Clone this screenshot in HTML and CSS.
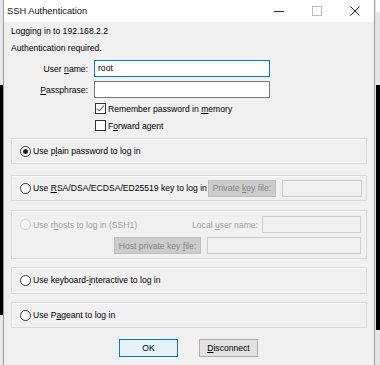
FILE: index.html
```html
<!DOCTYPE html>
<html>
<head>
<meta charset="utf-8">
<link rel="stylesheet" href="styles.css">
</head>
<body>
<div class="window">
  <div class="titlebar">
    <span class="title">SSH Authentication</span>
    <div class="controls">
      <span class="ctl"><svg width="10" height="10" viewBox="0 0 10 10"><path d="M0 5.5H10" stroke="#222" stroke-width="1"/></svg></span>
      <span class="ctl"><svg width="10" height="10" viewBox="0 0 10 10"><rect x="0.5" y="0.5" width="9" height="9" fill="none" stroke="#bbb" stroke-width="1"/></svg></span>
      <span class="ctl"><svg width="10" height="10" viewBox="0 0 10 10"><path d="M0.5 0.5L9.5 9.5M9.5 0.5L0.5 9.5" stroke="#222" stroke-width="1"/></svg></span>
    </div>
  </div>
  <div class="content">
    <div class="info">Logging in to 192.168.2.2</div>
    <div class="info">Authentication required.</div>
    <div class="form">
      <label class="lbl">User <u>n</u>ame:</label>
      <div class="input focus">root</div>
      <label class="lbl"><u>P</u>assphrase:</label>
      <div class="input"></div>
      <span></span>
      <div class="check"><span class="box checked"><svg width="11" height="11" viewBox="0 0 11 11"><path d="M2 5.5L4.3 8L9 2.5" fill="none" stroke="#333" stroke-width="1"/></svg></span><span>Remember password in <u>m</u>emory</span></div>
      <span></span>
      <div class="check"><span class="box"></span><span>F<u>o</u>rward agent</span></div>
    </div>

    <div class="group g1">
      <div class="row"><span class="radio on"></span><span>Use p<u>l</u>ain password to log in</span></div>
    </div>
    <div class="group g2">
      <div class="row">
        <span class="radio"></span><span>Use <u>R</u>SA/DSA/ECDSA/ED25519 key to log in</span>
        <span class="btn dis keybtn"><span>Private <u>k</u>ey file:</span></span>
        <span class="input dis keyin"></span>
      </div>
    </div>
    <div class="group g3 disabled">
      <div class="row">
        <span class="radio"></span><span>Use r<u>h</u>osts to log in (SSH1)</span>
        <span class="local">Local <u>u</u>ser name:</span>
        <span class="input dis localin"></span>
      </div>
      <div class="row row2">
        <span class="btn dis hostbtn"><span>Host private key <u>f</u>ile:</span></span>
        <span class="input dis hostin"></span>
      </div>
    </div>
    <div class="group g4">
      <div class="row"><span class="radio"></span><span>Use keyboard-<u>i</u>nteractive to log in</span></div>
    </div>
    <div class="group g5">
      <div class="row"><span class="radio"></span><span>Use P<u>a</u>geant to log in</span></div>
    </div>

    <div class="buttons">
      <span class="btn ok">OK</span>
      <span class="btn"><span><u>D</u>isconnect</span></span>
    </div>
  </div>
</div>
</body>
</html>
```
FILE: styles.css
```css
html, body {
  margin: 0;
  padding: 0;
}
body {
  width: 380px;
  height: 365px;
  overflow: hidden;
  font-family: "Liberation Sans", Arial, sans-serif;
  font-size: 8.6px;
  color: #000;
  background:
    linear-gradient(#000, #000) 0 85px / 3px 230px no-repeat,
    linear-gradient(#000, #000) 376px 85px / 4px 245px no-repeat,
    linear-gradient(#fff, #fff) 376px 0 / 4px 12px no-repeat,
    #e6e6e6;
}
u { text-decoration: underline; text-underline-offset: 1px; }

.window {
  margin-left: 3px;
  width: 370px;
  height: 372px;
  border-left: 1px solid #9c9c9c;
  border-right: 1px solid #9c9c9c;
  background: #f0f0f0;
}
.titlebar {
  height: 22px;
  background: #fff;
  display: flex;
  align-items: center;
}
.title {
  padding-left: 3px;
  font-size: 9.3px;
  color: #111;
}
.controls {
  margin-left: auto;
  display: flex;
  align-items: center;
}
.ctl {
  width: 38px;
  height: 22px;
  display: flex;
  align-items: center;
  justify-content: center;
}
.ctl svg { display: block; }

.content {
  padding: 3px 7px 0 6px;
}
.info {
  height: 13px;
  line-height: 13px;
  padding-left: 1px;
}
.info + .info { margin-top: 4px; }

.form {
  display: grid;
  grid-template-columns: 78px 176px;
  grid-template-rows: 17px 17px 13px 13px;
  row-gap: 4px;
  column-gap: 6px;
  margin-top: 5px;
  align-items: center;
}
.lbl {
  text-align: right;
}
.input {
  box-sizing: border-box;
  height: 17px;
  border: 1px solid #7a7a7a;
  background: #fff;
  padding-left: 3px;
  line-height: 15px;
  display: block;
}
.input.focus { border-color: #0078d7; }
.input.dis {
  border-color: #cccccc;
  background: #f0f0f0;
}
.check {
  display: flex;
  align-items: center;
  margin-left: 1px;
  white-space: nowrap;
}
.box {
  box-sizing: border-box;
  width: 11px;
  height: 11px;
  border: 1px solid #333;
  background: #fff;
  margin-right: 2px;
  position: relative;
  flex: none;
}
.box svg { position: absolute; left: -1px; top: -1px; }

.group {
  box-sizing: border-box;
  margin-left: 1px;
  border: 1px solid #dadada;
  box-shadow: inset 1px 1px 0 #fbfbfb;
  padding: 0 4px 0 8px;
}
.g1 { margin-top: 6px; height: 26px; }
.g2 { margin-top: 11px; height: 26px; }
.g3 { margin-top: 9px; height: 49px; padding-top: 5px; padding-right: 5px; }
.g4 { margin-top: 8px; height: 27px; }
.g5 { margin-top: 8px; height: 26px; }
.row {
  display: flex;
  align-items: center;
  height: 24px;
  white-space: nowrap;
}
.g3 .row { height: 17px; }
.g3 .row2 { margin-top: 4px; justify-content: flex-end; }
.radio {
  box-sizing: border-box;
  width: 11px;
  height: 11px;
  border: 1px solid #333;
  border-radius: 50%;
  background: #fff;
  margin-right: 2px;
  flex: none;
  position: relative;
}
.radio.on::after {
  content: "";
  position: absolute;
  left: 2px; top: 2px;
  width: 5px; height: 5px;
  border-radius: 50%;
  background: #222;
}
.disabled { color: #a0a0a0; }
.disabled .radio { border-color: #cfcfcf; background: #f5f5f5; }

.btn {
  box-sizing: border-box;
  display: inline-flex;
  align-items: center;
  justify-content: center;
  height: 17px;
  border: 1px solid #adadad;
  background: #e1e1e1;
  white-space: nowrap;
}
.btn.dis {
  border-color: #bfbfbf;
  background: #cccccc;
  color: #838383;
}
.keybtn { margin-left: auto; width: 68px; }
.keyin { width: 80px; margin-left: 6px; }
.local { margin-left: auto; margin-right: 4px; }
.localin { width: 99px; }
.hostbtn { width: 87px; }
.hostin { width: 154px; margin-left: 6px; }

.buttons {
  display: flex;
  justify-content: center;
  gap: 21px;
  margin-top: 11px;
}
.buttons .btn { width: 59px; height: 18px; }
.btn.ok {
  border-color: #0078d7;
  background: #e5f1fb;
}
```
